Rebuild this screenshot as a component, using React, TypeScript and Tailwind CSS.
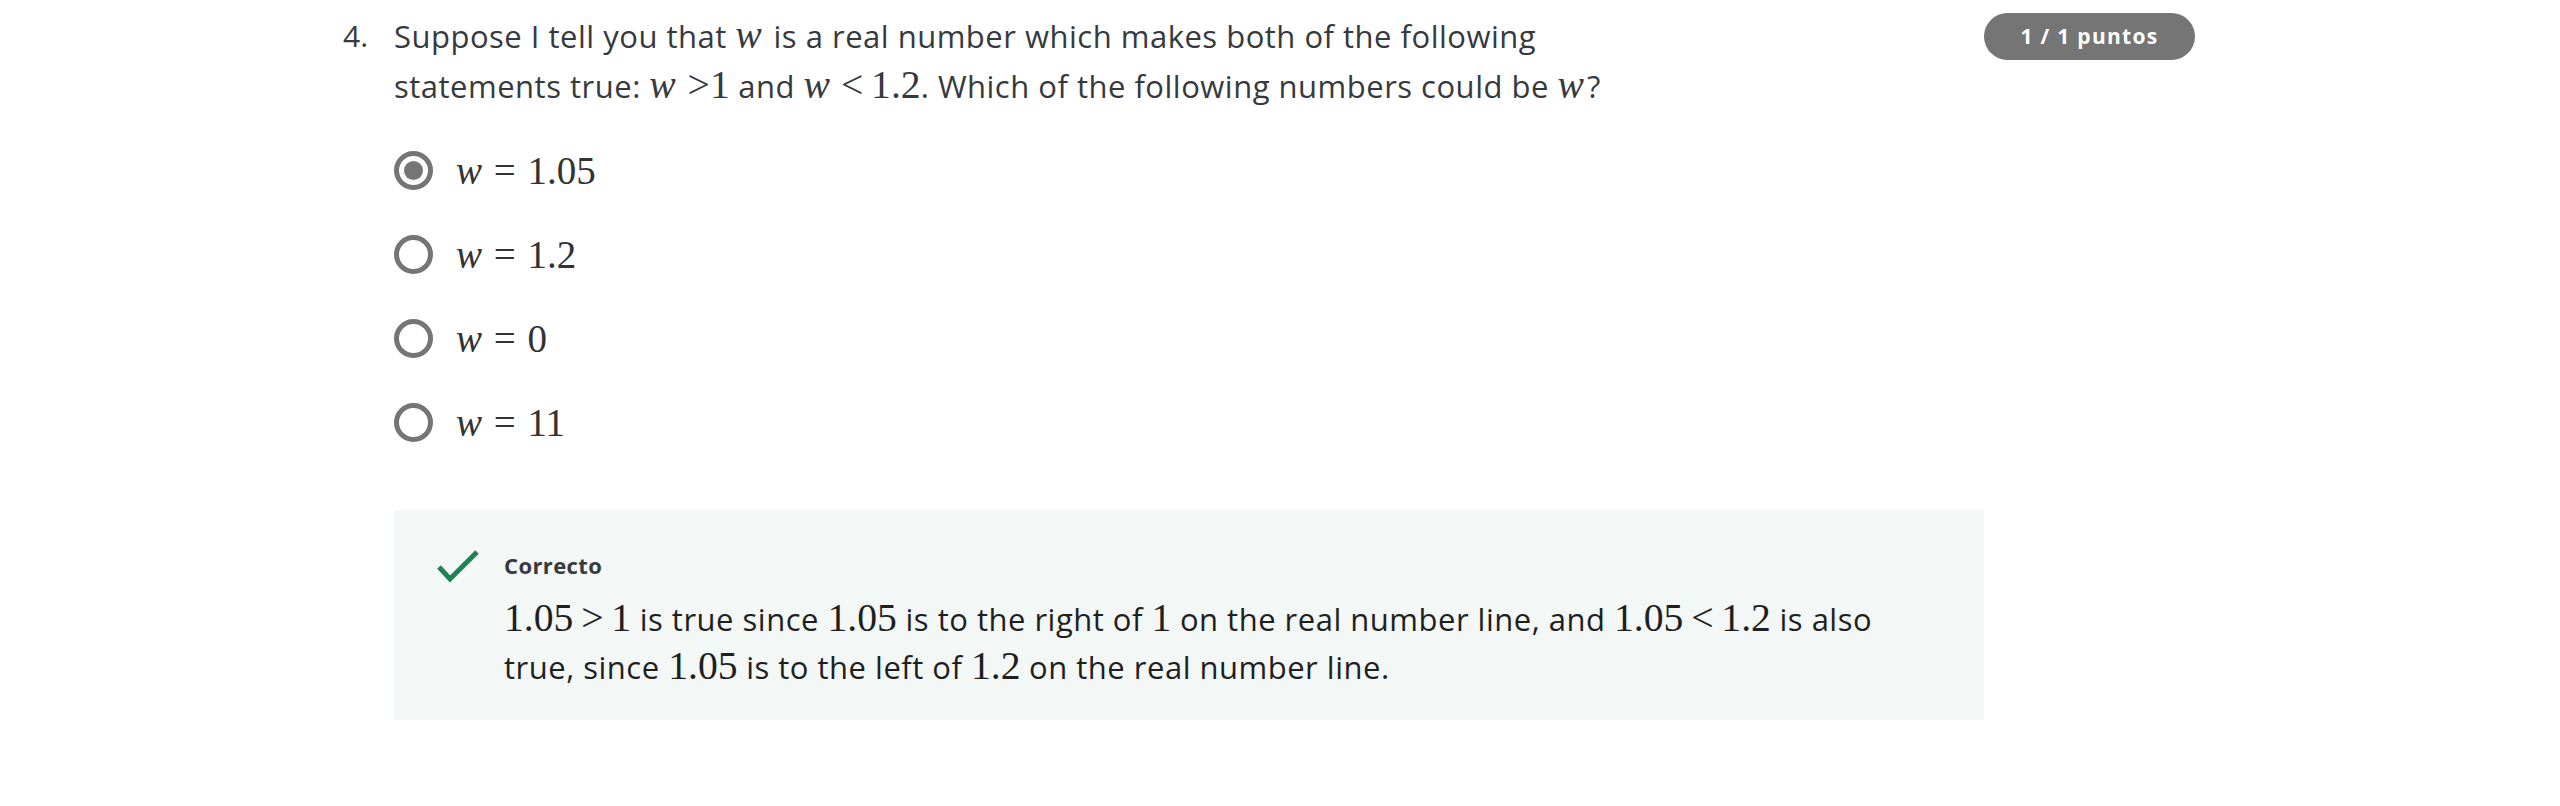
const sans = { fontFamily: '"Open Sans", sans-serif' }

function M({ children, italic }: { children: React.ReactNode; italic?: boolean }) {
  return (
    <span
      className={`font-['Liberation_Serif',serif] text-[1.28em] leading-none tracking-normal ${italic ? 'italic pr-[0.08em]' : ''}`}
    >
      {children}
    </span>
  )
}

function Op({ children }: { children: React.ReactNode }) {
  return <span className="mx-[0.25em]">{children}</span>
}

function Radio({ checked }: { checked?: boolean }) {
  return (
    <span className="flex h-[39px] w-[39px] shrink-0 items-center justify-center rounded-full border-[5px] border-[#757575]">
      {checked && <span className="h-[19px] w-[19px] rounded-full bg-[#757575]" />}
    </span>
  )
}

const options = [
  { value: '1.05', checked: true },
  { value: '1.2' },
  { value: '0' },
  { value: '11' },
]

export default function App() {
  return (
    <div className="min-h-[806px] bg-white text-[#373a3c]" style={sans}>
      <div className="flex pl-[343px] pt-[11px]">
        <div className="w-[51px] shrink-0 text-[30px] leading-[50px]">4.</div>

        <div className="w-[1590px] shrink-0">
          <p className="whitespace-nowrap text-[31px] leading-[50px] tracking-[0.5px]">
            Suppose I tell you that <M italic>w</M> is a real number which makes both of the following
            <br />
            statements true: <M italic>w</M> <M>&gt;1</M> and <M italic>w</M>
            <Op>
              <M>&lt;</M>
            </Op>
            <M>1.2</M>. Which of the following numbers could be <M italic>w</M>?
          </p>

          <div className="mt-[40px] flex flex-col gap-[45px]">
            {options.map((o) => (
              <label key={o.value} className="flex items-center gap-[23px]">
                <Radio checked={o.checked} />
                <span className="font-['Liberation_Serif',serif] text-[39px] leading-[39px] text-[#333]">
                  <span className="italic">w</span>
                  <span className="mx-[0.3em]">=</span>
                  {o.value}
                </span>
              </label>
            ))}
          </div>

          <div className="mt-[68px] flex items-start bg-[#f3f8f6] pb-[29px] pl-[41px] pt-[38px]">
            <svg width="46" height="36" viewBox="0 0 46 36" className="shrink-0">
              <polyline points="4,19 15,31 42,4" fill="none" stroke="#1f8354" strokeWidth="5" />
            </svg>
            <div className="ml-[23px]">
              <div className="text-[22px] font-bold leading-[34px] tracking-[0.4px] text-[#373a3c]">Correcto</div>
              <p className="mt-[13px] whitespace-nowrap text-[31px] leading-[48px] tracking-[0.5px] text-[#1f1f1f]">
                <M>1.05</M>
                <Op>
                  <M>&gt;</M>
                </Op>
                <M>1</M> is true since <M>1.05</M> is to the right of <M>1</M> on the real number line, and{' '}
                <M>1.05</M>
                <Op>
                  <M>&lt;</M>
                </Op>
                <M>1.2</M> is also
                <br />
                true, since <M>1.05</M> is to the left of <M>1.2</M> on the real number line.
              </p>
            </div>
          </div>
        </div>

        <div className="shrink-0 pt-[2px]">
          <span className="flex h-[47px] w-[211px] items-center justify-center rounded-full bg-[#757575] text-[21px] font-bold tracking-[1.3px] text-white">
            1 / 1 puntos
          </span>
        </div>
      </div>
    </div>
  )
}
